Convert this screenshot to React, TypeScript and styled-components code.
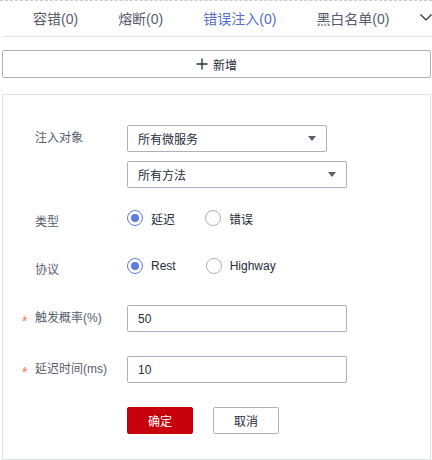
import React from "react";
import styled, { createGlobalStyle } from "styled-components";

const GlobalStyle = createGlobalStyle`
  body {
    margin: 0;
    background: #ffffff;
    font-family: "Liberation Sans", "Noto Sans CJK SC", sans-serif;
  }
`;

const Page = styled.div`
  width: 432px;
  height: 460px;
  overflow: hidden;
  border-top: 1px dashed #c8cad0;
  box-sizing: border-box;
`;

const Content = styled.div`
  padding: 0 1px 0 2px;
`;

const TabBar = styled.div`
  display: flex;
  align-items: center;
  height: 36px;
  padding: 0 0 0 31px;
  border-bottom: 1px solid #dfe1e6;
  box-sizing: border-box;
  margin-right: -1px;
`;

const Tab = styled.div<{ $active?: boolean; $last?: boolean }>`
  font-size: 14px;
  margin-right: ${(p) => (p.$last ? 0 : 40)}px;
  color: ${(p) => (p.$active ? "#526ecc" : "#575d6c")};
  white-space: nowrap;
  margin-top: -2px;
  flex-shrink: 0;
`;

const More = styled.span`
  margin-left: auto;
  width: 12px;
  flex-shrink: 0;
  display: flex;
  align-items: center;
  margin-top: -3px;
`;

const AddButton = styled.button`
  display: flex;
  align-items: center;
  justify-content: center;
  gap: 5px;
  width: 100%;
  height: 28px;
  margin-top: 13px;
  border: 1px solid #adb0b8;
  border-radius: 2px;
  background: #ffffff;
  font-family: inherit;
  font-size: 12px;
  color: #252b3a;
  padding: 0;
`;

const Panel = styled.div`
  margin-top: 16px;
  border: 1px solid #e0e1e4;
  padding: 30px 0 30px 0;
  height: 366px;
  box-sizing: border-box;
`;

const Row = styled.div<{ $gap?: number }>`
  display: flex;
  align-items: flex-start;
  margin-top: ${(p) => p.$gap ?? 0}px;
`;

const Label = styled.div<{ $line: number; $offset?: number }>`
  width: 124px;
  padding-left: 32px;
  box-sizing: border-box;
  font-size: 12px;
  color: #575d6c;
  line-height: ${(p) => p.$line}px;
  padding-top: ${(p) => p.$offset ?? 0}px;
  white-space: nowrap;
`;

const Star = styled.span`
  display: inline-block;
  width: 13px;
  margin-left: -13px;
  color: #f66f6a;
  font-size: 14px;
  vertical-align: -4px;
`;

const Controls = styled.div`
  display: flex;
  flex-direction: column;
  gap: 9px;
`;

const SelectBox = styled.div<{ $width: number }>`
  width: ${(p) => p.$width}px;
  height: 27px;
  border: 1px solid #adb0b8;
  border-radius: 2px;
  box-sizing: border-box;
  display: flex;
  align-items: center;
  justify-content: space-between;
  padding: 0 10px;
  font-size: 12px;
  color: #252b3a;
`;

const Caret = styled.span`
  width: 0;
  height: 0;
  border-left: 4px solid transparent;
  border-right: 4px solid transparent;
  border-top: 5px solid #575d6c;
`;

const TextInput = styled.div`
  width: 220px;
  height: 27px;
  border: 1px solid #adb0b8;
  border-radius: 2px;
  box-sizing: border-box;
  display: flex;
  align-items: center;
  padding: 0 10px;
  font-size: 12px;
  color: #252b3a;
`;

const RadioGroup = styled.div`
  display: flex;
  align-items: center;
  height: 20px;
`;

const RadioItem = styled.label`
  display: flex;
  align-items: center;
  gap: 8px;
  margin-right: 30px;
  font-size: 12px;
  color: #252b3a;
`;

const RadioCircle = styled.span<{ $checked?: boolean }>`
  width: 16px;
  height: 16px;
  border-radius: 50%;
  box-sizing: border-box;
  border: 1px solid ${(p) => (p.$checked ? "#5e7ce0" : "#adb0b8")};
  display: flex;
  align-items: center;
  justify-content: center;

  &::after {
    content: "";
    display: ${(p) => (p.$checked ? "block" : "none")};
    width: 8px;
    height: 8px;
    border-radius: 50%;
    background: #5e7ce0;
  }
`;

const ActionButton = styled.button<{ $primary?: boolean }>`
  width: 66px;
  height: 27px;
  margin-right: 20px;
  border-radius: 2px;
  font-family: inherit;
  font-size: 12px;
  padding: 0;
  border: 1px solid ${(p) => (p.$primary ? "#c7000b" : "#adb0b8")};
  background: ${(p) => (p.$primary ? "#c7000b" : "#ffffff")};
  color: ${(p) => (p.$primary ? "#ffffff" : "#252b3a")};
`;

const Radio: React.FC<{ checked?: boolean; label: string }> = ({ checked, label }) => (
  <RadioItem>
    <RadioCircle $checked={checked} />
    {label}
  </RadioItem>
);

const tabs = ["容错(0)", "熔断(0)", "错误注入(0)", "黑白名单(0)"];

const App: React.FC = () => {
  return (
    <Page>
      <GlobalStyle />
      <Content>
        <TabBar>
          {tabs.map((t, i) => (
            <Tab key={t} $active={i === 2} $last={i === tabs.length - 1}>
              {t}
            </Tab>
          ))}
          <More>
            <svg width="12" height="7" viewBox="0 0 12 7">
              <path d="M0.5 0.5 L6 6 L11.5 0.5" fill="none" stroke="#252b3a" strokeWidth="1.2" />
            </svg>
          </More>
        </TabBar>

        <AddButton>
          <svg width="12" height="12" viewBox="0 0 12 12">
            <path d="M6 0.5 V11.5 M0.5 6 H11.5" stroke="#252b3a" strokeWidth="1.3" />
          </svg>
          新增
        </AddButton>

        <Panel>
          <Row>
            <Label $line={27}>注入对象</Label>
            <Controls>
              <SelectBox $width={200}>
                所有微服务
                <Caret />
              </SelectBox>
              <SelectBox $width={220}>
                所有方法
                <Caret />
              </SelectBox>
            </Controls>
          </Row>

          <Row $gap={20}>
            <Label $line={20} $offset={4}>类型</Label>
            <RadioGroup>
              <Radio checked label="延迟" />
              <Radio label="错误" />
            </RadioGroup>
          </Row>

          <Row $gap={24}>
            <Label $line={20} $offset={4}>协议</Label>
            <RadioGroup>
              <Radio checked label="Rest" />
              <Radio label="Highway" />
            </RadioGroup>
          </Row>

          <Row $gap={25}>
            <Label $line={27}>
              <Star>*</Star>触发概率(%)
            </Label>
            <TextInput>50</TextInput>
          </Row>

          <Row $gap={21}>
            <Label $line={27}>
              <Star>*</Star>延迟时间(ms)
            </Label>
            <TextInput>10</TextInput>
          </Row>

          <Row $gap={21}>
            <Label $line={27} />
            <ActionButton $primary>确定</ActionButton>
            <ActionButton>取消</ActionButton>
          </Row>
        </Panel>
      </Content>
    </Page>
  );
};

export default App;
